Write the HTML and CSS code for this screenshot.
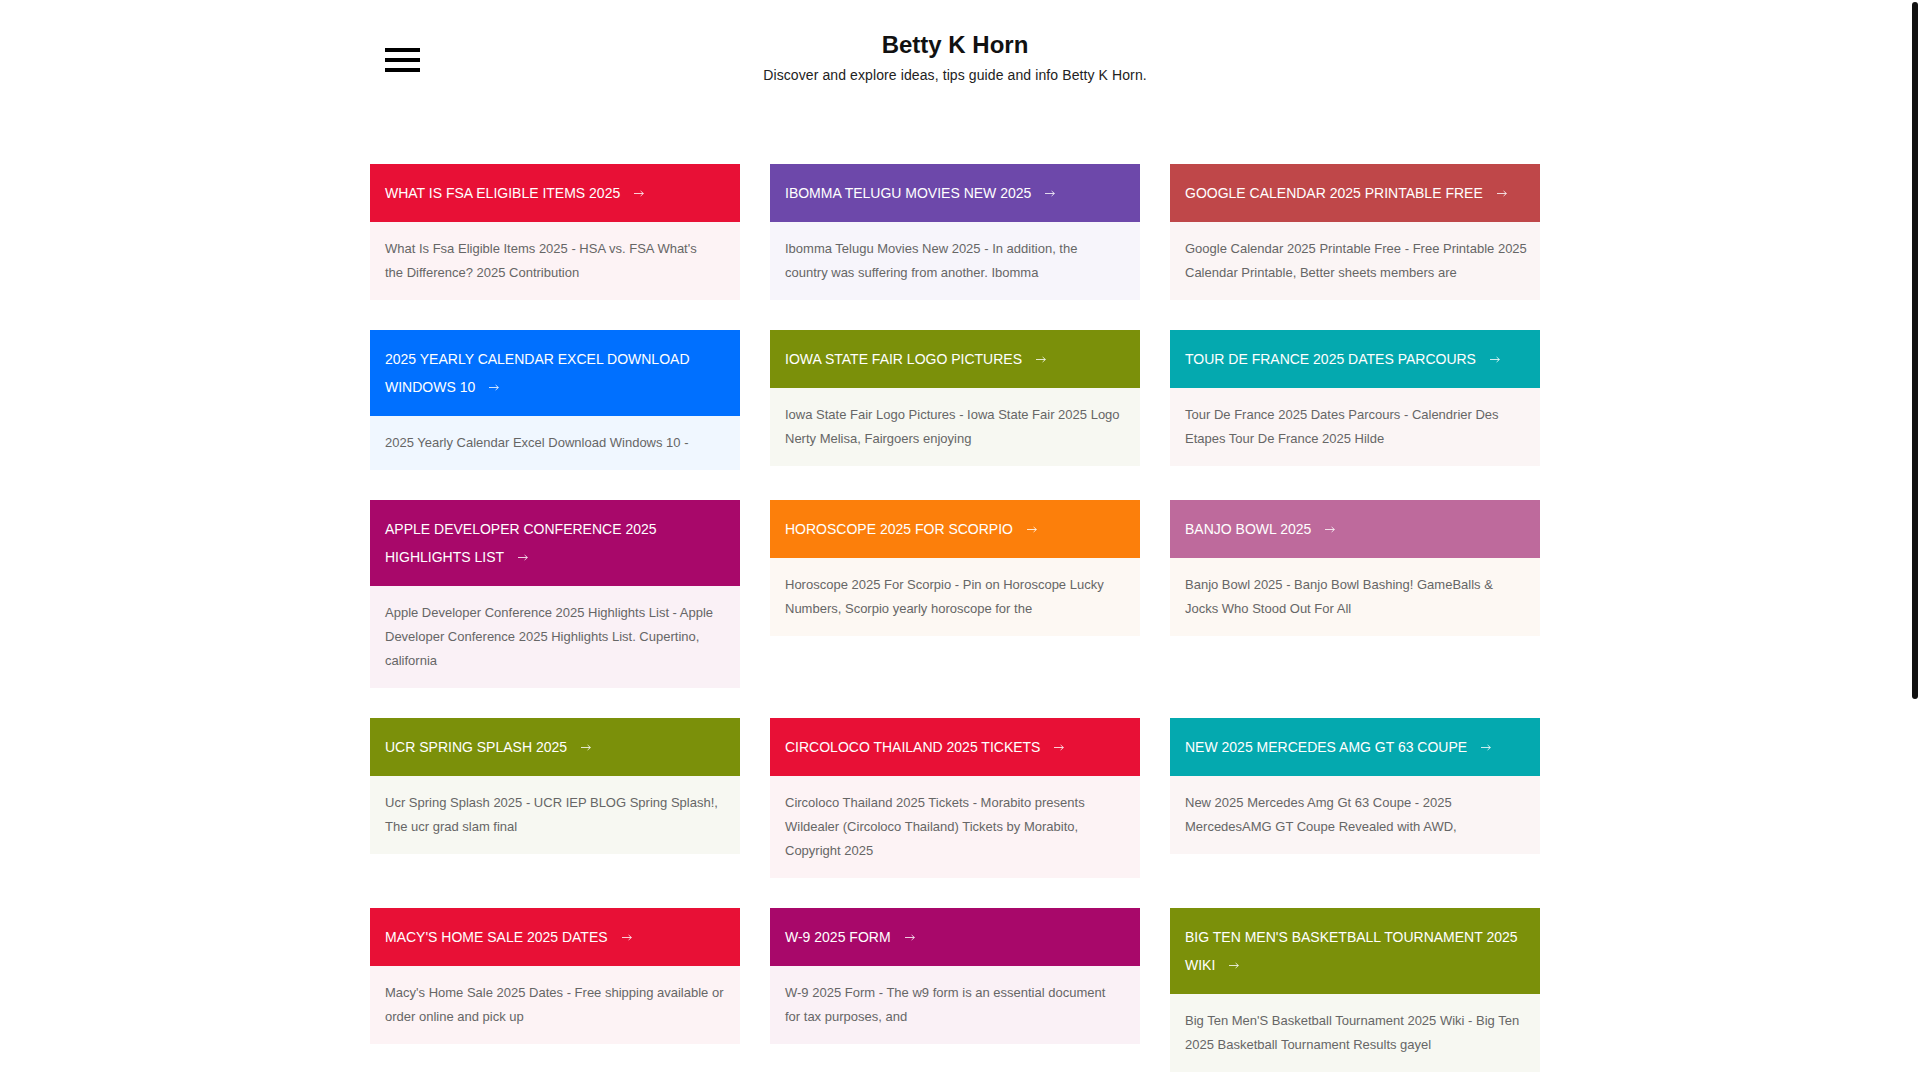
FILE: index.html
```html
<!DOCTYPE html>
<html lang="en">
<head>
<meta charset="utf-8">
<title>Betty K Horn</title>
<link rel="stylesheet" href="styles.css">
</head>
<body>
<div class="scroll-thumb" aria-hidden="true"></div>
<div class="container">
  <header class="site-header">
    <button class="menu-toggle" aria-label="Menu">
      <span class="bar"></span><span class="bar"></span><span class="bar"></span>
    </button>
    <div class="branding">
      <h1 class="site-title">Betty K Horn</h1>
      <p class="site-desc">Discover and explore ideas, tips guide and info Betty K Horn.</p>
    </div>
    <div class="spacer"></div>
  </header>

  <main class="posts">
    <article class="card c-red">
      <h2 class="card-title">WHAT IS FSA ELIGIBLE ITEMS 2025<svg class="arrow" viewBox="0 0 10 7" aria-hidden="true"><path d="M0 3.5H9.3M6.6 1L9.4 3.5L6.6 6"/></svg></h2>
      <p class="card-text">What Is Fsa Eligible Items 2025 - HSA vs. FSA What's<br>the Difference? 2025 Contribution</p>
    </article>
    <article class="card c-purple">
      <h2 class="card-title">IBOMMA TELUGU MOVIES NEW 2025<svg class="arrow" viewBox="0 0 10 7" aria-hidden="true"><path d="M0 3.5H9.3M6.6 1L9.4 3.5L6.6 6"/></svg></h2>
      <p class="card-text">Ibomma Telugu Movies New 2025 - In addition, the<br>country was suffering from another. Ibomma</p>
    </article>
    <article class="card c-brick">
      <h2 class="card-title">GOOGLE CALENDAR 2025 PRINTABLE FREE<svg class="arrow" viewBox="0 0 10 7" aria-hidden="true"><path d="M0 3.5H9.3M6.6 1L9.4 3.5L6.6 6"/></svg></h2>
      <p class="card-text">Google Calendar 2025 Printable Free - Free Printable 2025 Calendar Printable, Better sheets members are</p>
    </article>

    <article class="card c-blue">
      <h2 class="card-title">2025 YEARLY CALENDAR EXCEL DOWNLOAD WINDOWS 10<svg class="arrow" viewBox="0 0 10 7" aria-hidden="true"><path d="M0 3.5H9.3M6.6 1L9.4 3.5L6.6 6"/></svg></h2>
      <p class="card-text">2025 Yearly Calendar Excel Download Windows 10 -</p>
    </article>
    <article class="card c-olive">
      <h2 class="card-title">IOWA STATE FAIR LOGO PICTURES<svg class="arrow" viewBox="0 0 10 7" aria-hidden="true"><path d="M0 3.5H9.3M6.6 1L9.4 3.5L6.6 6"/></svg></h2>
      <p class="card-text">Iowa State Fair Logo Pictures - Iowa State Fair 2025 Logo Nerty Melisa, Fairgoers enjoying</p>
    </article>
    <article class="card c-teal">
      <h2 class="card-title">TOUR DE FRANCE 2025 DATES PARCOURS<svg class="arrow" viewBox="0 0 10 7" aria-hidden="true"><path d="M0 3.5H9.3M6.6 1L9.4 3.5L6.6 6"/></svg></h2>
      <p class="card-text">Tour De France 2025 Dates Parcours - Calendrier Des Etapes Tour De France 2025 Hilde</p>
    </article>

    <article class="card c-magenta">
      <h2 class="card-title">APPLE DEVELOPER CONFERENCE 2025 HIGHLIGHTS LIST<svg class="arrow" viewBox="0 0 10 7" aria-hidden="true"><path d="M0 3.5H9.3M6.6 1L9.4 3.5L6.6 6"/></svg></h2>
      <p class="card-text">Apple Developer Conference 2025 Highlights List - Apple Developer Conference 2025 Highlights List. Cupertino, california</p>
    </article>
    <article class="card c-orange">
      <h2 class="card-title">HOROSCOPE 2025 FOR SCORPIO<svg class="arrow" viewBox="0 0 10 7" aria-hidden="true"><path d="M0 3.5H9.3M6.6 1L9.4 3.5L6.6 6"/></svg></h2>
      <p class="card-text">Horoscope 2025 For Scorpio - Pin on Horoscope Lucky Numbers, Scorpio yearly horoscope for the</p>
    </article>
    <article class="card c-pink">
      <h2 class="card-title">BANJO BOWL 2025<svg class="arrow" viewBox="0 0 10 7" aria-hidden="true"><path d="M0 3.5H9.3M6.6 1L9.4 3.5L6.6 6"/></svg></h2>
      <p class="card-text">Banjo Bowl 2025 - Banjo Bowl Bashing! GameBalls &amp; Jocks Who Stood Out For All</p>
    </article>

    <article class="card c-olive">
      <h2 class="card-title">UCR SPRING SPLASH 2025<svg class="arrow" viewBox="0 0 10 7" aria-hidden="true"><path d="M0 3.5H9.3M6.6 1L9.4 3.5L6.6 6"/></svg></h2>
      <p class="card-text">Ucr Spring Splash 2025 - UCR IEP BLOG Spring Splash!, The ucr grad slam final</p>
    </article>
    <article class="card c-red">
      <h2 class="card-title">CIRCOLOCO THAILAND 2025 TICKETS<svg class="arrow" viewBox="0 0 10 7" aria-hidden="true"><path d="M0 3.5H9.3M6.6 1L9.4 3.5L6.6 6"/></svg></h2>
      <p class="card-text">Circoloco Thailand 2025 Tickets - Morabito presents Wildealer (Circoloco Thailand) Tickets by Morabito, Copyright 2025</p>
    </article>
    <article class="card c-teal">
      <h2 class="card-title">NEW 2025 MERCEDES AMG GT 63 COUPE<svg class="arrow" viewBox="0 0 10 7" aria-hidden="true"><path d="M0 3.5H9.3M6.6 1L9.4 3.5L6.6 6"/></svg></h2>
      <p class="card-text">New 2025 Mercedes Amg Gt 63 Coupe - 2025 MercedesAMG GT Coupe Revealed with AWD,</p>
    </article>

    <article class="card c-red">
      <h2 class="card-title">MACY'S HOME SALE 2025 DATES<svg class="arrow" viewBox="0 0 10 7" aria-hidden="true"><path d="M0 3.5H9.3M6.6 1L9.4 3.5L6.6 6"/></svg></h2>
      <p class="card-text">Macy's Home Sale 2025 Dates - Free shipping available or order online and pick up</p>
    </article>
    <article class="card c-magenta">
      <h2 class="card-title">W-9 2025 FORM<svg class="arrow" viewBox="0 0 10 7" aria-hidden="true"><path d="M0 3.5H9.3M6.6 1L9.4 3.5L6.6 6"/></svg></h2>
      <p class="card-text">W-9 2025 Form - The w9 form is an essential document<br>for tax purposes, and</p>
    </article>
    <article class="card c-olive">
      <h2 class="card-title">BIG TEN MEN'S BASKETBALL TOURNAMENT 2025 WIKI<svg class="arrow" viewBox="0 0 10 7" aria-hidden="true"><path d="M0 3.5H9.3M6.6 1L9.4 3.5L6.6 6"/></svg></h2>
      <p class="card-text">Big Ten Men'S Basketball Tournament 2025 Wiki - Big Ten 2025 Basketball Tournament Results gayel</p>
    </article>
  </main>
</div>
</body>
</html>
```

FILE: styles.css
```css
html, body {
  margin: 0;
  padding: 0;
  background: #fff;
}

body {
  font-family: "Liberation Sans", Arial, Helvetica, sans-serif;
  color: #222;
  padding-right: 10px;
}

/* scrollbar thumb drawn over the page's right edge */
.scroll-thumb {
  position: fixed;
  top: 2px;
  right: 2px;
  width: 6px;
  height: 697px;
  background: #111;
  border-radius: 3px;
  z-index: 10;
}

.container {
  width: 1170px;
  margin: 0 auto;
  padding-bottom: 600px;
}

.site-header {
  display: grid;
  grid-template-columns: 1fr auto 1fr;
  align-items: start;
  padding-top: 30px;
}

.menu-toggle {
  justify-self: start;
  margin: 18px 0 0 15px;
  padding: 0;
  border: 0;
  background: transparent;
  width: 35px;
  height: 24px;
  display: flex;
  flex-direction: column;
  justify-content: space-between;
  cursor: pointer;
}

.menu-toggle .bar {
  display: block;
  width: 35px;
  height: 4px;
  background: #000;
}

.branding {
  text-align: center;
}

.site-title {
  margin: 0;
  font-size: 24px;
  line-height: 30px;
  font-weight: bold;
  color: #111;
}

.site-desc {
  margin: 5px 0 0;
  font-size: 14px;
  line-height: 20px;
  letter-spacing: 0.1px;
  color: #222;
}

.posts {
  display: grid;
  grid-template-columns: repeat(3, 370px);
  column-gap: 30px;
  row-gap: 30px;
  align-items: start;
  margin-top: 79px;
}

.card {
  margin: 0;
}

.card-title {
  margin: 0;
  padding: 15px;
  font-size: 14px;
  line-height: 28px;
  font-weight: normal;
  color: #fff;
}

.arrow {
  display: inline-block;
  width: 10px;
  height: 7px;
  margin-left: 14px;
  vertical-align: 1px;
  fill: none;
  stroke: #fff;
  stroke-width: 0.8;
}

.card-text {
  margin: 0;
  padding: 15px 13px 15px 15px;
  font-size: 13px;
  line-height: 24px;
  color: #666;
}

.c-red .card-title { background: #e81036; }
.c-red .card-text { background: #fdf3f5; }

.c-purple .card-title { background: #6d48aa; }
.c-purple .card-text { background: #f7f5fb; }

.c-brick .card-title { background: #bf4749; }
.c-brick .card-text { background: #fbf5f5; }

.c-blue .card-title { background: #0070ff; }
.c-blue .card-text { background: #f0f7ff; }

.c-olive .card-title { background: #7b900a; }
.c-olive .card-text { background: #f7f8f2; }

.c-teal .card-title { background: #04a9af; }
.c-teal .card-text { background: #fbf5f5; }

.c-magenta .card-title { background: #a8086a; }
.c-magenta .card-text { background: #faf1f6; }

.c-orange .card-title { background: #fc7f0b; }
.c-orange .card-text { background: #fdf8f3; }

.c-pink .card-title { background: #be6a9c; }
.c-pink .card-text { background: #fdf8f3; }
```
